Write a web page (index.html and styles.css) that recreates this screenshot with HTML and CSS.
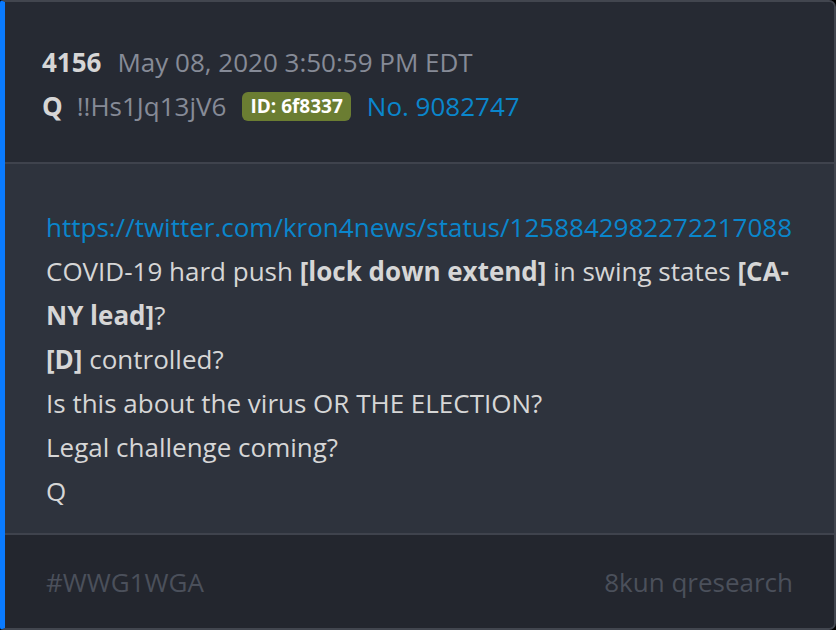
FILE: index.html
```
<!DOCTYPE html>
<html>
<head>
<meta charset="utf-8">
<link rel="stylesheet" href="styles.css">
</head>
<body>
<div class="card">
  <div class="head">
    <div class="row"><span class="num">4156</span><span class="date">May 08, 2020 3:50:59 PM EDT</span></div>
    <div class="row"><span class="q">Q</span><span class="trip">!!Hs1Jq13jV6</span><span class="badge">ID: 6f8337</span><span class="no">No. 9082747</span></div>
  </div>
  <div class="body">
    <div class="link">https://twitter.com/kron4news/status/1258842982272217088</div>
    <div>COVID-19 hard push <b>[lock down extend]</b> in swing states <b>[CA-NY lead]</b>?</div>
    <div><b>[D]</b> controlled?</div>
    <div>Is this about the virus OR THE ELECTION?</div>
    <div>Legal challenge coming?</div>
    <div>Q</div>
  </div>
  <div class="foot">
    <span>#WWG1WGA</span>
    <span>8kun qresearch</span>
  </div>
</div>
</body>
</html>
```
FILE: styles.css
```
html, body { margin: 0; padding: 0; background: #000; }
body { font-family: "Open Sans", "Noto Sans", sans-serif; }
.card {
  width: 836px; height: 630px; box-sizing: border-box;
  border: 2px solid #42464f; border-left: 5px solid #0a7bff;
  border-radius: 3px 7px 7px 3px;
  background: #2e333d;
  display: flex; flex-direction: column; overflow: hidden;
}
.head {
  background: #262a33; height: 162px; flex: none; box-sizing: border-box;
  padding: 38px 0 0 37px;
  border-bottom: 2px solid #3f434d;
}
.row { display: flex; align-items: center; height: 44px; font-size: 26px; }
.num { font-weight: 700; color: #d6d6d6; margin-right: 16px; }
.date { color: #868b97; }
.q { font-weight: 700; color: #d6d6d6; margin-right: 14px; }
.trip { color: #868b97; margin-right: 16px; }
.badge { background: #6b7d32; color: #fff; font-weight: 700; font-size: 19px; border-radius: 6px; padding: 0 8px; height: 29px; line-height: 29px; margin-right: 16px; }
.no { color: #0a86cc; }
.body {
  flex: 1; box-sizing: border-box;
  padding: 41px 40px 0 41px;
  font-size: 26px; line-height: 44px; color: #d6d6d6;
  border-bottom: 2px solid #3f434d;
}
.body b { font-weight: 700; }
.link { color: #0a86cc; }
.foot {
  background: #23262e; height: 93px; flex: none; display: flex; justify-content: space-between; align-items: center;
  padding: 0 41px; font-size: 26px; color: #4b505b;
}
```
